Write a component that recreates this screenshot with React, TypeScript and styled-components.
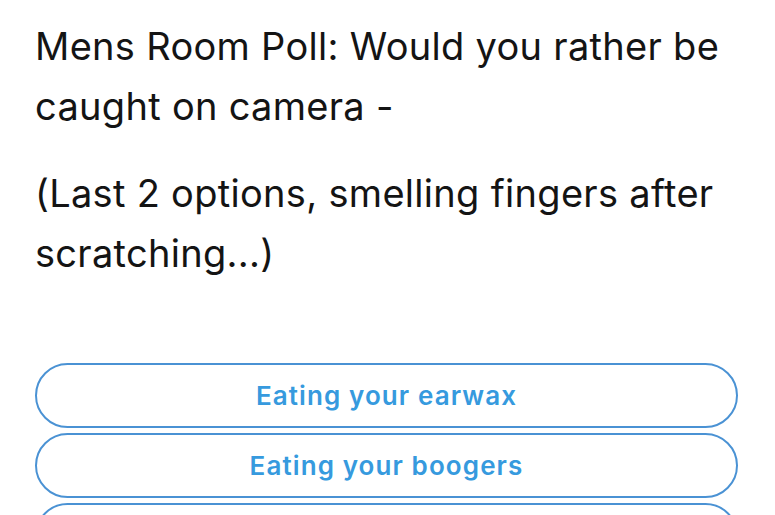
import React from "react";
import styled, { createGlobalStyle } from "styled-components";

const GlobalStyle = createGlobalStyle`
    html, body {
        margin: 0;
        padding: 0;
        background: #ffffff;
    }
`;

const Page = styled.div`
    width: 775px;
    height: 515px;
    overflow: hidden;
    padding: 0 37px 0 35px;
    box-sizing: border-box;
    font-family: Inter, "Noto Sans", sans-serif;
`;

const TweetText = styled.div`
    padding-top: 16px;
    color: #141414;
    font-size: 38px;
    line-height: 60px;
    letter-spacing: 0.3px;
    font-weight: 400;
`;

const Para = styled.p`
    margin: 0 0 27px 0;
`;

const Options = styled.div`
    display: flex;
    flex-direction: column;
    gap: 5px;
    margin-top: 80px;
`;

const OptionButton = styled.button`
    height: 65px;
    width: 100%;
    border: 2px solid #4a92d4;
    border-radius: 33px;
    background: #ffffff;
    color: #369ade;
    font-family: Inter, "Noto Sans", sans-serif;
    font-size: 26px;
    letter-spacing: 1.1px;
    font-weight: 600;
    flex-shrink: 0;
`;

const options: string[] = ["Eating your earwax", "Eating your boogers", "Smelling your fingers"];

export default function App() {
    return (
        <Page>
            <GlobalStyle />
            <TweetText>
                <Para>Mens Room Poll: Would you rather be caught on camera -</Para>
                <Para>(Last 2 options, smelling fingers after scratching...)</Para>
            </TweetText>
            <Options>
                {options.map((item: string, key: number) => (
                    <OptionButton key={key}>{item}</OptionButton>
                ))}
            </Options>
        </Page>
    );
}
